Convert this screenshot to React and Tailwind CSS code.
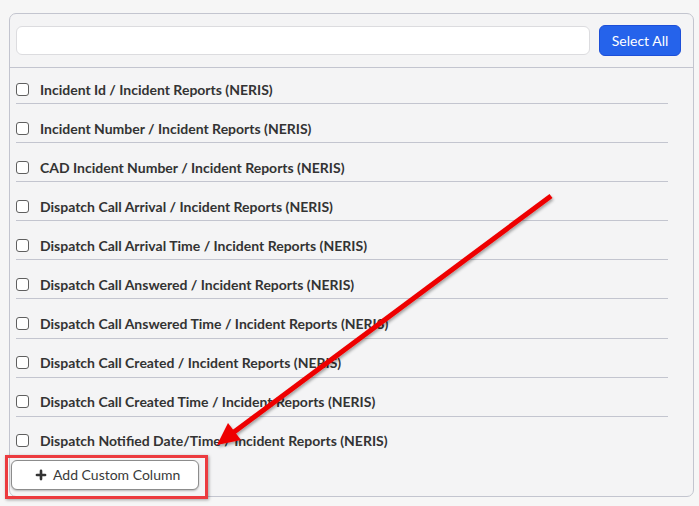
import { Plus } from 'lucide-react';

const COLUMNS = [
  'Incident Id / Incident Reports (NERIS)',
  'Incident Number / Incident Reports (NERIS)',
  'CAD Incident Number / Incident Reports (NERIS)',
  'Dispatch Call Arrival / Incident Reports (NERIS)',
  'Dispatch Call Arrival Time / Incident Reports (NERIS)',
  'Dispatch Call Answered / Incident Reports (NERIS)',
  'Dispatch Call Answered Time / Incident Reports (NERIS)',
  'Dispatch Call Created / Incident Reports (NERIS)',
  'Dispatch Call Created Time / Incident Reports (NERIS)',
  'Dispatch Notified Date/Time / Incident Reports (NERIS)',
];

function ColumnRow({ label, last }) {
  return (
    <div className={last ? '' : 'pb-[6px] mb-[16.1px] border-b border-[#c3c5cf]'}>
      <label className="flex items-center h-[16px] gap-[11px]">
        <span className="w-[13px] h-[13px] border border-[#5f5f5f] rounded-[3px] bg-white flex-shrink-0" />
        <span className="text-[14px] font-bold text-[#333] whitespace-nowrap">{label}</span>
      </label>
    </div>
  );
}

export default function App() {
  return (
    <div
      className="relative w-[699px] h-[506px] bg-[#f6f6f6] pt-[13px] pl-[9px] pr-[5px] overflow-hidden"
      style={{ fontFamily: 'Lato, "Open Sans", sans-serif' }}
    >
      <div className="h-[484px] border border-[#c3c5cf] rounded-[7px] bg-[#f4f4f5]">
        <div className="flex items-center gap-[9px] pl-[6px] pr-[12px] pt-[11px] pb-[11px] border-b border-[#c3c5cf]">
          <input className="flex-1 h-[29px] bg-white border border-[#dcdcdf] rounded-[6px] outline-none" />
          <button className="w-[82px] h-[31px] bg-[#2563eb] text-white text-[14px] rounded-[6px] border border-[#1d4fd8]">
            Select All
          </button>
        </div>

        <div className="ml-[6px] mr-[25px] pt-[13px]">
          {COLUMNS.map((c, i) => (
            <ColumnRow key={c} label={c} last={i === COLUMNS.length - 1} />
          ))}
        </div>

        <div className="mt-[11px] ml-[1px]">
          <button className="flex items-center gap-[5px] w-[188px] h-[30px] pl-[22px] bg-white border border-[#8c8c8c] rounded-[6px] shadow-[0_1px_2px_rgba(0,0,0,0.25)] text-[14px] text-[#3a3a3a]">
            <Plus className="w-[14px] h-[14px] text-[#333]" strokeWidth={4.5} />
            Add Custom Column
          </button>
        </div>
      </div>

      {/* annotation: red box */}
      <div className="absolute left-[5px] top-[455px] w-[203px] h-[44px] border-[3px] border-[#ec3b3f] shadow-[1px_1px_3px_rgba(0,0,0,0.35)] pointer-events-none" />

      {/* annotation: arrow */}
      <svg className="absolute inset-0 pointer-events-none" width="699" height="506">
        <defs>
          <filter id="sh" x="-10%" y="-10%" width="120%" height="120%">
            <feDropShadow dx="1" dy="2" stdDeviation="1.5" floodColor="#000" floodOpacity="0.35" />
          </filter>
        </defs>
        <g filter="url(#sh)">
          <line x1="551" y1="196" x2="234" y2="432" stroke="#ee0000" strokeWidth="5" strokeLinecap="butt" />
          <polygon points="217,445 241,440 228,423" fill="#ee0000" />
        </g>
      </svg>
    </div>
  );
}
